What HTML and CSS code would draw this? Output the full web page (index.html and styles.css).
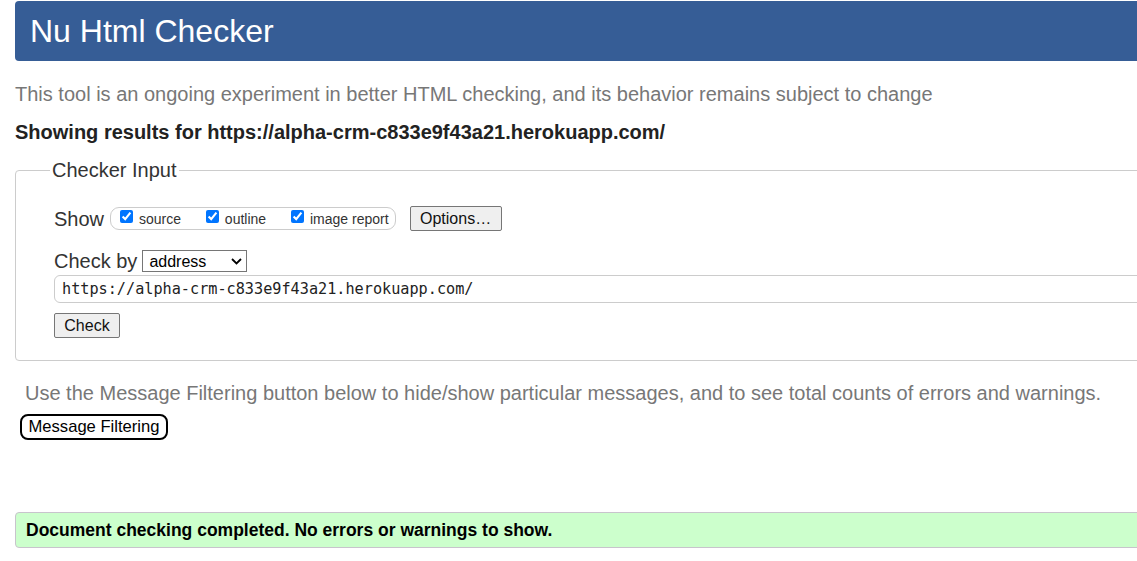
FILE: index.html
```html
<!DOCTYPE html>
<html lang="en">
<head>
<meta charset="utf-8">
<title>Nu Html Checker</title>
<link rel="stylesheet" href="styles.css">
</head>
<body>
<div class="page">
  <header class="banner"><h1>Nu Html Checker</h1></header>
  <p class="intro">This tool is an ongoing experiment in better HTML checking, and its behavior remains subject to change</p>
  <p class="showing">Showing results for https://alpha-crm-c833e9f43a21.herokuapp.com/</p>

  <fieldset class="checker">
    <legend>Checker Input</legend>
    <div class="row show-row">
      <span class="label">Show</span>
      <span class="opts">
        <label class="opt"><input type="checkbox" checked> source</label>
        <label class="opt"><input type="checkbox" checked> outline</label>
        <label class="opt last"><input type="checkbox" checked> image report</label>
      </span>
      <button class="btn options">Options…</button>
    </div>
    <div class="row by-row">
      <span class="label">Check by</span>
      <span class="select-wrap">
        <select class="select"><option>address</option></select>
        <svg class="chev" width="11" height="7" viewBox="0 0 11 7"><path d="M1 1 L5.5 5.5 L10 1" fill="none" stroke="#000" stroke-width="1.8"/></svg>
      </span>
    </div>
    <input class="url" type="text" value="https://alpha-crm-c833e9f43a21.herokuapp.com/">
    <div class="row submit-row"><button class="btn check">Check</button></div>
  </fieldset>

  <p class="note">Use the Message Filtering button below to hide/show particular messages, and to see total counts of errors and warnings.</p>
  <button class="filter">Message Filtering</button>

  <div class="success"><p>Document checking completed. No errors or warnings to show.</p></div>
</div>
</body>
</html>
```

FILE: styles.css
```css
html, body {
  margin: 0;
  overflow: hidden;
  background: #fff;
}
body {
  font-family: "Liberation Sans", Arial, sans-serif;
  color: #222;
}
.page {
  width: 1160px;
  padding: 1px 0 0 15px;
}
.banner {
  height: 60px;
  background: #365d96;
  border-radius: 4px;
  padding-left: 15px;
}
.banner h1 {
  margin: 0;
  font-size: 32px;
  font-weight: normal;
  line-height: 60px;
  color: #fff;
}
.intro {
  margin: 21px 0 0;
  font-size: 20px;
  line-height: 24px;
  color: #777;
}
.showing {
  margin: 14px 0 0;
  font-size: 20px;
  line-height: 24px;
  font-weight: bold;
  color: #222;
}
.checker {
  margin: 14px 0 0;
  border: 1px solid #ccc;
  border-radius: 4px;
  padding: 24px 0 22px 38px;
  min-width: 0;
}
.checker legend {
  margin-left: -4px;
  padding: 0 2px;
  font-size: 20px;
  line-height: 24px;
  color: #333;
}
.row {
  display: flex;
  align-items: center;
}
.label {
  font-size: 20px;
  line-height: 24px;
  color: #333;
}
.show-row {
  height: 25px;
}
.opts {
  display: flex;
  align-items: center;
  height: 21px;
  margin-left: 6px;
  padding: 0 6px 0 9px;
  border: 1px solid #ccc;
  border-radius: 9px;
}
.opt {
  display: flex;
  align-items: center;
  font-size: 14px;
  line-height: 16px;
  color: #333;
  margin-right: 25px;
  white-space: pre;
}
.opt.last {
  margin-right: 0;
}
.opt input {
  width: 13px;
  height: 13px;
  margin: -5px 2px 0 0;
}
.btn {
  font-family: "Liberation Sans", Arial, sans-serif;
  font-size: 16px;
  color: #111;
  background: #efefef;
  border: 1px solid #767676;
  border-radius: 2px;
  padding: 0;
}
.options {
  margin-left: 14px;
  width: 92px;
  height: 25px;
}
.by-row {
  margin-top: 19px;
  height: 22px;
}
.select-wrap {
  position: relative;
  margin-left: 5px;
  display: inline-block;
  height: 22px;
}
.select {
  appearance: none;
  -webkit-appearance: none;
  width: 105px;
  height: 22px;
  margin: 0;
  padding: 0 0 0 6px;
  border: 1px solid #767676;
  border-radius: 0;
  background: #fff;
  font-family: "Liberation Sans", Arial, sans-serif;
  font-size: 16px;
  color: #000;
}
.chev {
  position: absolute;
  right: 5px;
  top: 8px;
  pointer-events: none;
}
.url {
  display: block;
  box-sizing: border-box;
  margin: 3px 0 0;
  width: 1110px;
  height: 28px;
  padding: 0 7px;
  border: 1px solid #ccc;
  border-radius: 6px;
  font-family: "DejaVu Sans Mono", "Liberation Mono", monospace;
  font-size: 15.2px;
  color: #222;
  background: #fff;
}
.submit-row {
  margin-top: 10px;
}
.check {
  width: 66px;
  height: 25px;
}
.note {
  margin: 20px 0 0 10px;
  font-size: 20px;
  line-height: 24px;
  color: #777;
}
.filter {
  display: block;
  margin: 9px 0 0 5px;
  width: 148px;
  height: 26px;
  padding: 0;
  background: #fff;
  border: 2px solid #000;
  border-radius: 8px;
  font-family: "Liberation Sans", Arial, sans-serif;
  font-size: 16.6px;
  color: #000;
}
.success {
  margin-top: 72px;
  height: 36px;
  box-sizing: border-box;
  display: flex;
  align-items: center;
  padding: 0 10px;
  background: #ccffcc;
  border: 1px solid #c8c4cc;
  border-radius: 4px;
}
.success p {
  margin: 0;
  font-size: 17.5px;
  font-weight: bold;
  color: #000;
}
```
